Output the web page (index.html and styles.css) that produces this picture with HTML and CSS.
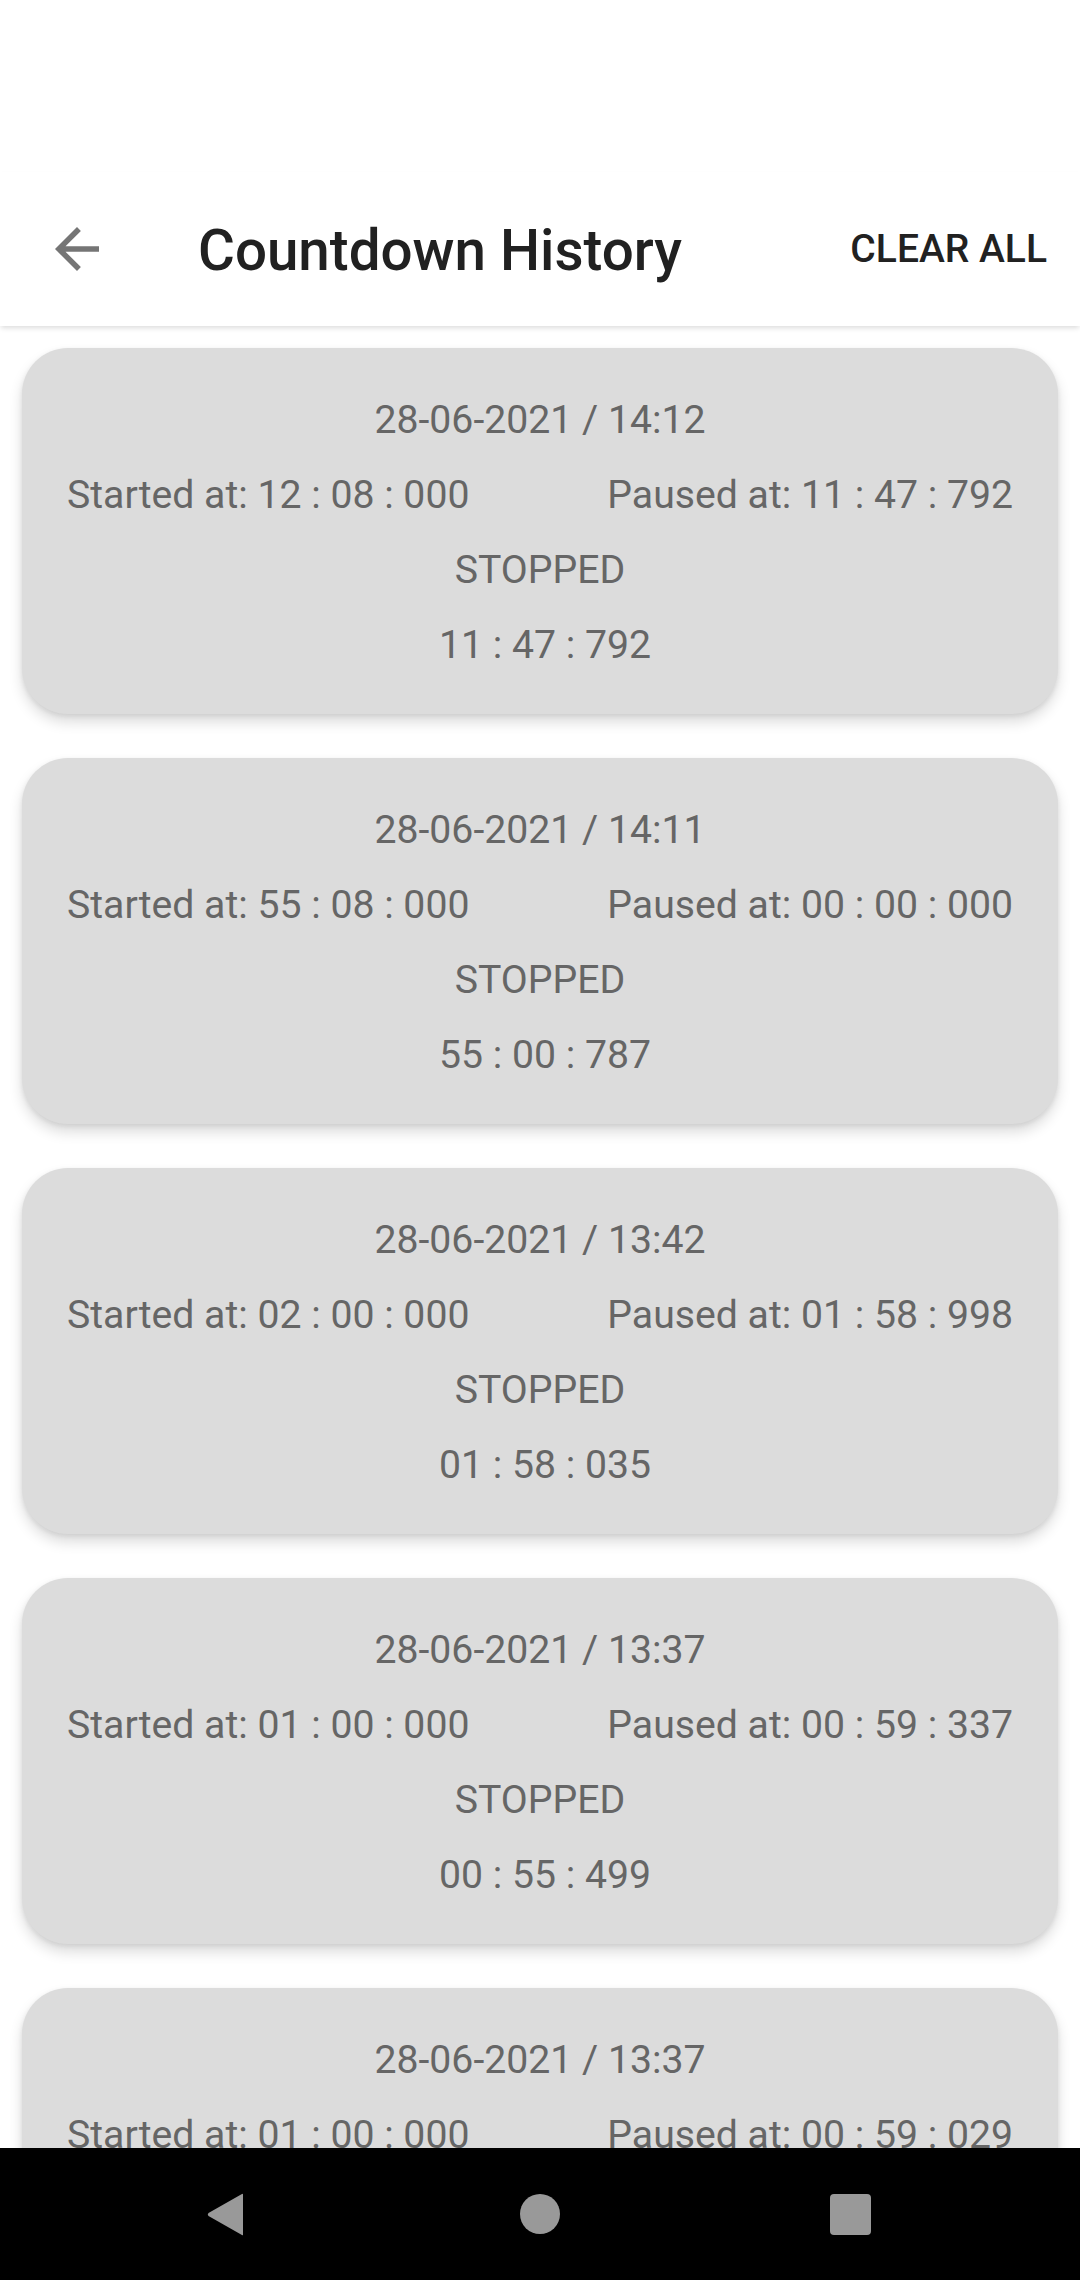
FILE: index.html
```html
<!DOCTYPE html>
<html>
<head>
<meta charset="utf-8">
<link rel="stylesheet" href="styles.css">
</head>
<body>
<div class="screen">
  <div class="status-space"></div>
  <header class="appbar">
    <button class="back" aria-label="Back">
      <svg viewBox="0 0 24 24" width="66" height="66"><path d="M20 11H7.830l5.59-5.59L12 4l-8 8 8 8 1.41-1.41L7.83 13H20v-2z" fill="#757575"/></svg>
    </button>
    <h1 class="title">Countdown History</h1>
    <button class="clear">CLEAR ALL</button>
  </header>
  <main class="list">
    <div class="card">
      <div class="line">28-06-2021 / 14:12</div>
      <div class="row"><span>Started at: 12 : 08 : 000</span><span>Paused at: 11 : 47 : 792</span></div>
      <div class="line">STOPPED</div>
      <div class="line time">11 : 47 : 792</div>
    </div>
    <div class="card">
      <div class="line">28-06-2021 / 14:11</div>
      <div class="row"><span>Started at: 55 : 08 : 000</span><span>Paused at: 00 : 00 : 000</span></div>
      <div class="line">STOPPED</div>
      <div class="line time">55 : 00 : 787</div>
    </div>
    <div class="card">
      <div class="line">28-06-2021 / 13:42</div>
      <div class="row"><span>Started at: 02 : 00 : 000</span><span>Paused at: 01 : 58 : 998</span></div>
      <div class="line">STOPPED</div>
      <div class="line time">01 : 58 : 035</div>
    </div>
    <div class="card">
      <div class="line">28-06-2021 / 13:37</div>
      <div class="row"><span>Started at: 01 : 00 : 000</span><span>Paused at: 00 : 59 : 337</span></div>
      <div class="line">STOPPED</div>
      <div class="line time">00 : 55 : 499</div>
    </div>
    <div class="card">
      <div class="line">28-06-2021 / 13:37</div>
      <div class="row"><span>Started at: 01 : 00 : 000</span><span>Paused at: 00 : 59 : 029</span></div>
    </div>
  </main>
  <nav class="navbar">
    <svg class="nav-back" viewBox="0 0 38 43" width="38" height="43"><path d="M36 1.5 L36 41.5 Q36 43 34.5 41.8 L1.5 23 Q0 21.5 1.5 20 L34.5 1.2 Q36 0 36 1.5 Z" fill="#999"/></svg>
    <span class="nav-home"></span>
    <span class="nav-recent"></span>
  </nav>
</div>
</body>
</html>
```

FILE: styles.css
```css
* { box-sizing: border-box; }
html, body {
  margin: 0;
  padding: 0;
  background: #ffffff;
  font-family: Roboto, "Liberation Sans", Arial, sans-serif;
}
.screen {
  width: 1080px;
  height: 2280px;
  display: flex;
  flex-direction: column;
  overflow: hidden;
}
.status-space {
  height: 172px;
  flex: none;
  background: #ffffff;
}
.appbar {
  height: 154px;
  flex: none;
  display: flex;
  align-items: center;
  background: #ffffff;
  box-shadow: 0 3px 5px -1px rgba(0,0,0,0.14);
  position: relative;
  z-index: 2;
}
.back {
  width: 66px;
  height: 66px;
  margin-left: 44px;
  padding: 0;
  border: 0;
  background: none;
  display: flex;
}
.title {
  margin: 4px 0 0 88px;
  font-size: 56.5px;
  font-weight: 500;
  color: #212121;
  flex: 1;
}
.clear {
  border: 0;
  background: none;
  font-family: inherit;
  font-size: 39px;
  font-weight: 500;
  color: #212121;
  padding: 0 33px 0 0;
  margin-top: 0;
}
.list {
  flex: 1;
  overflow: hidden;
}
.card {
  margin: 22px 22px 44px 22px;
  height: 366px;
  background: #dcdcdc;
  border-radius: 46px;
  box-shadow: 0 8px 14px rgba(0,0,0,0.14), 0 2px 5px rgba(0,0,0,0.08);
  padding: 35px 45px 0 45px;
  color: #666666;
  font-size: 39.2px;
}
.card + .card { margin-top: 0; }
.line {
  height: 75px;
  line-height: 75px;
  text-align: center;
}
.time { padding-left: 10px; }
.row {
  height: 75px;
  line-height: 75px;
  display: flex;
  justify-content: space-between;
}
.navbar {
  height: 132px;
  flex: none;
  background: #000000;
  display: flex;
  align-items: center;
  position: relative;
  z-index: 3;
}
.nav-back {
  margin-left: 207px;
}
.nav-home {
  width: 40px;
  height: 40px;
  border-radius: 50%;
  background: #999;
  margin-left: 275px;
}
.nav-recent {
  width: 41px;
  height: 41px;
  border-radius: 4px;
  background: #999;
  margin-left: 270px;
}
```
